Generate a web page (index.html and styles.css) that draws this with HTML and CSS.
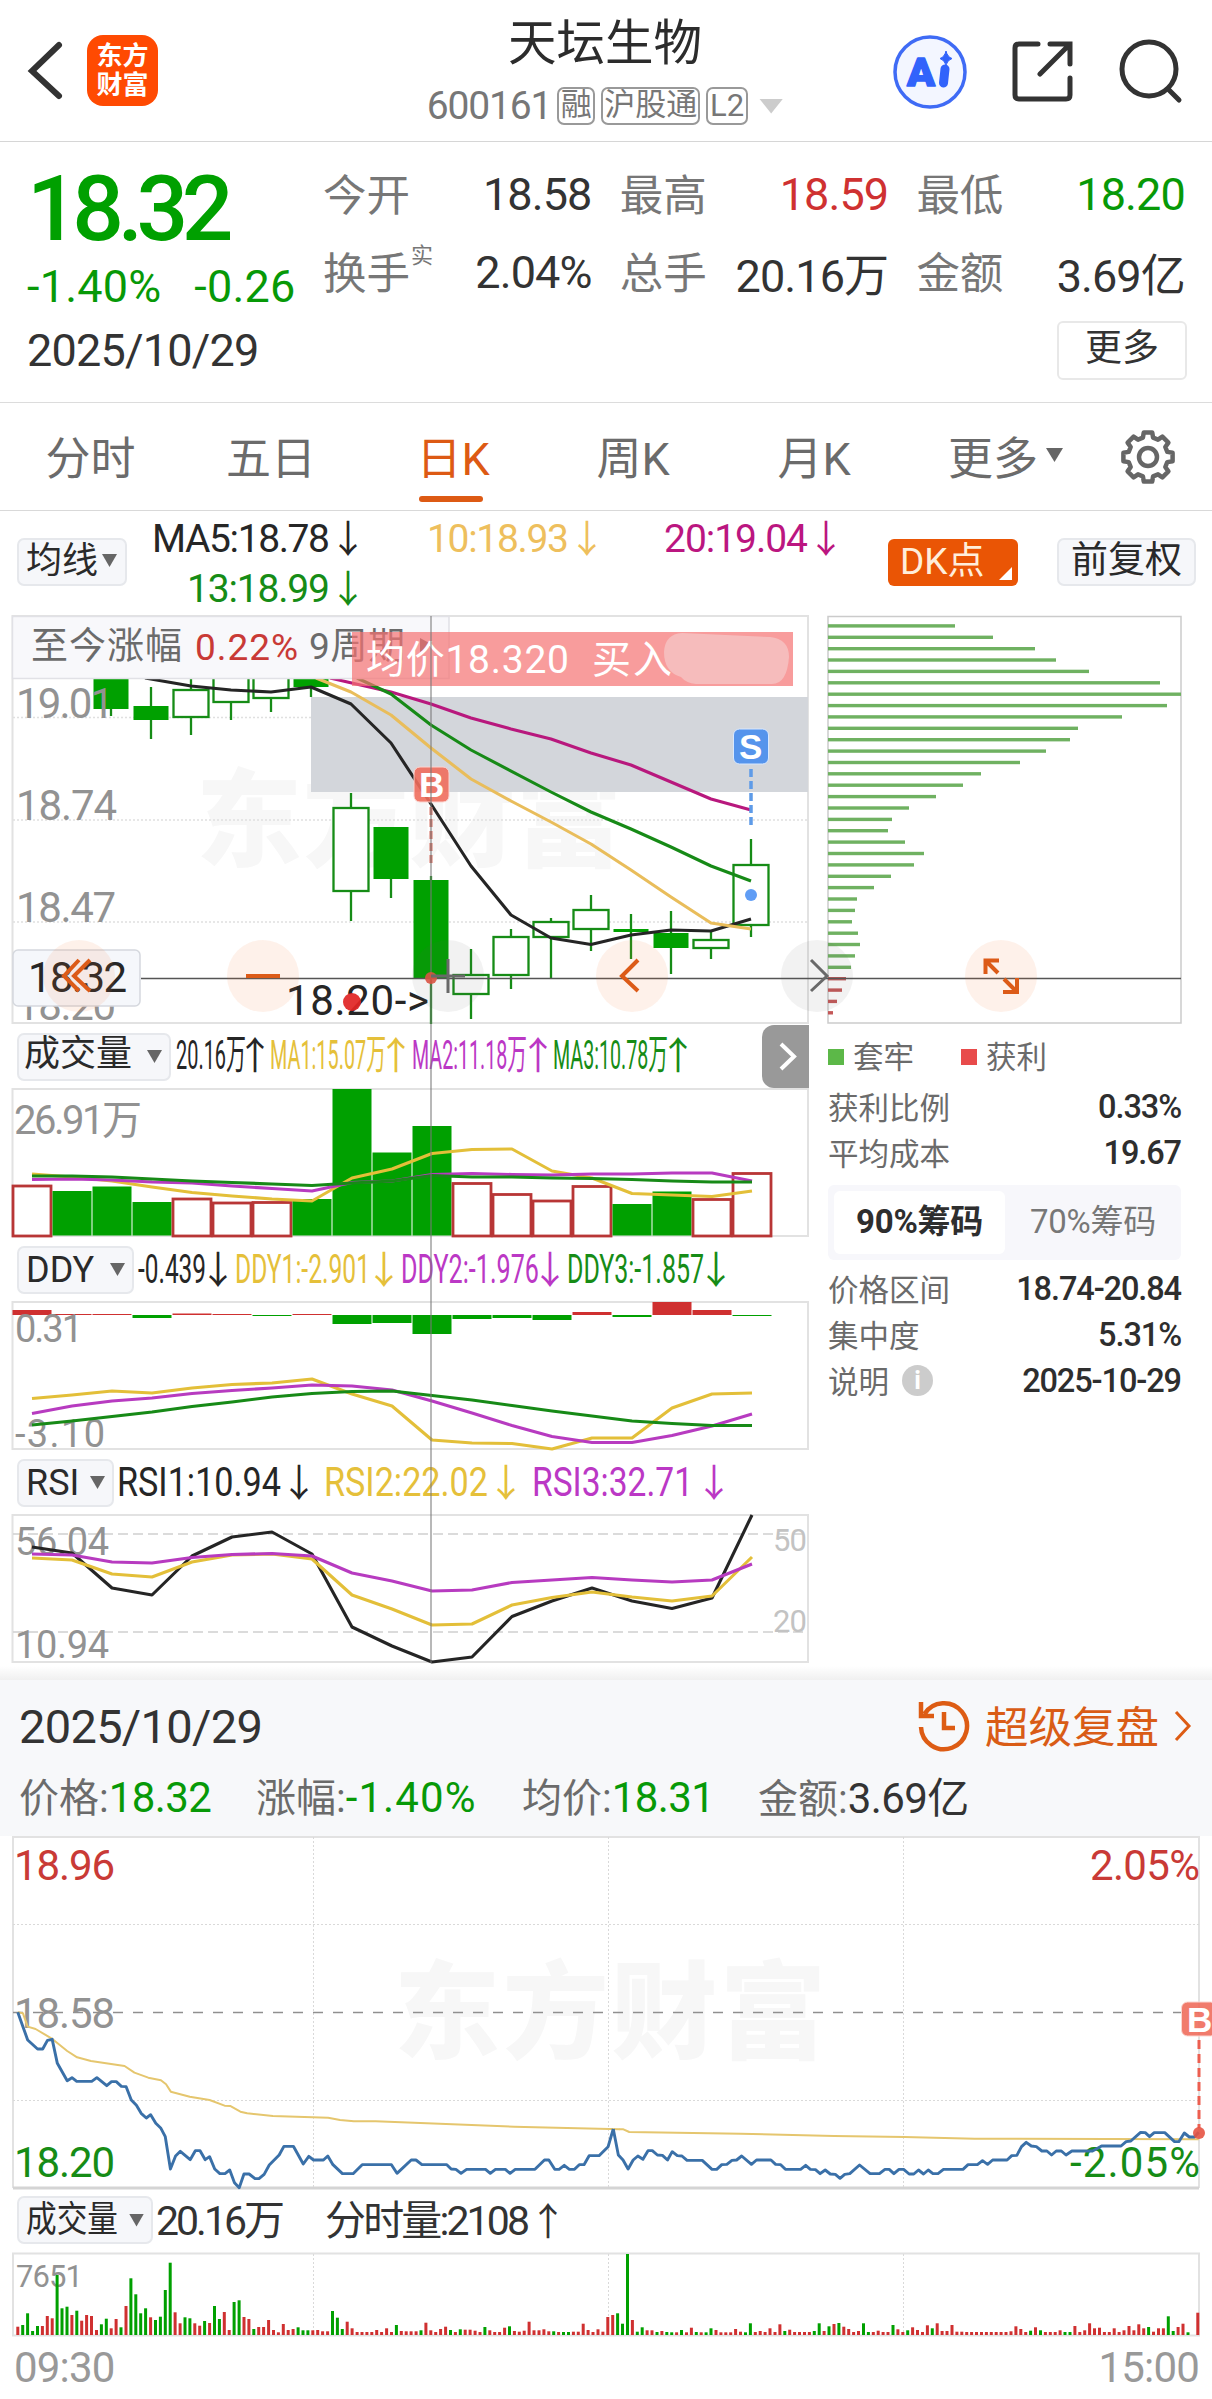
FILE: index.html
```html
<!DOCTYPE html>
<html lang="zh-CN">
<head>
<meta charset="utf-8">
<title>天坛生物 600161</title>
<link rel="stylesheet" href="styles.css">
</head>
<body>
<header class="topbar">
  <div class="topbar-left">
    <svg class="back" width="40" height="62" viewBox="24 41 40 62"><path d="M59 46 L32 72 L59 97"/></svg>
    <div class="logo"><span>东方</span><span>财富</span></div>
  </div>
  <div class="heading">
    <h1>天坛生物</h1>
    <div class="code-row"><span class="code">600161</span><span class="tag">融</span><span class="tag tag-wide">沪股通</span><span class="tag tag-l2">L2</span><i class="tri tri-light"></i></div>
  </div>
  <svg class="top-icons" width="310" height="90" viewBox="890 27 310 90">
    <circle class="ai-ring" cx="930" cy="72" r="35"/>
    <text class="ai-text" x="907" y="86" textLength="28" lengthAdjust="spacingAndGlyphs">A</text>
    <path class="ai-i" d="M945 69 L943.500 83"/>
    <path class="ai-star" d="M946 51 Q947.500 57 952 58.500 Q947.500 60 946 65 Q944.500 60 940 58.500 Q944.500 57 946 51Z"/>
    <path class="line-icon" d="M1038 44 H1019 Q1015 44 1015 48 V95 Q1015 99 1019 99 H1066 Q1070 99 1070 95 V78 M1050 44 H1070 V64 M1069 45 L1040 74"/>
    <circle class="line-icon" cx="1149" cy="69" r="27"/>
    <path class="line-icon" d="M1168 89 L1179 100"/>
  </svg>
</header>

<section class="quote">
  <div class="quote-main">
    <div class="price">18.32</div>
    <div class="change"><span>-1.40%</span><span>-0.26</span></div>
    <div class="date">2025/10/29</div>
  </div>
  <div class="quote-side">
    <div class="stats">
      <div class="stat"><span>今开</span><b>18.58</b></div>
      <div class="stat"><span>最高</span><b class="up">18.59</b></div>
      <div class="stat"><span>最低</span><b class="down">18.20</b></div>
      <div class="stat"><span>换手<sup>实</sup></span><b>2.04%</b></div>
      <div class="stat"><span>总手</span><b>20.16万</b></div>
      <div class="stat"><span>金额</span><b>3.69亿</b></div>
    </div>
    <div class="more-btn">更多</div>
  </div>
</section>

<nav class="tabs">
  <span>分时</span><span>五日</span><span class="active">日K</span><span>周K</span><span>月K</span><span>更多<i class="tri"></i></span>
  <svg width="60" height="60" viewBox="-30 -30 60 60"><path id="gear" class="gear"/><circle class="gear" r="9"/></svg>
</nav>

<section class="ma-row">
  <div class="pill pill-ma">均线<i class="tri"></i></div>
  <svg class="ma-values" width="740" height="101" viewBox="137 511 740 101">
    <g class="c-black"><text x="152" y="552" textLength="178">MA5:18.78</text><text class="arr" x="348" y="552">↓</text></g>
    <g class="c-gold"><text x="427" y="552" textLength="142">10:18.93</text><text class="arr" x="587" y="552">↓</text></g>
    <g class="c-mag"><text x="664" y="552" textLength="144">20:19.04</text><text class="arr" x="826" y="552">↓</text></g>
    <g class="c-green"><text x="187" y="602" textLength="143">13:18.99</text><text class="arr" x="348" y="602">↓</text></g>
  </svg>
  <div class="dk">DK点</div>
  <div class="pill pill-fq">前复权</div>
</section>

<section class="charts">
  <div class="charts-left">
    <svg class="chart" width="816" height="413" viewBox="0 612 816 413">
      <text class="watermark" x="196" y="858" textLength="426">东方财富</text>
      <path class="frame" d="M12.500 616H808V1023H12.500Z"/>
      <path class="dotted" d="M13 717.500H808M13 820H808M13 922H808"/>
      <rect class="gap-zone" x="311" y="697" width="497" height="95"/>
      <g id="candles"></g>
      <g class="axis"><text x="16" y="718" textLength="98">19.01</text><text x="16" y="820" textLength="101">18.74</text><text x="16" y="922" textLength="100">18.47</text><text x="16" y="1020" textLength="100">18.20</text></g>
      <polyline class="l-mag" points="330,678 391,692 431,704 471,718 511,729 551,739 591,753 631,765 671,782 711,799 751,810"/>
      <polyline class="l-green" points="357,678 391,694 431,725 471,750 551,792 591,812 631,829 671,847 711,866 751,881"/>
      <polyline class="l-black" points="145,678 191,686 231,690 271,692 311,687 351,704 391,743 431,804 471,866 511,915 551,938 591,944.500 631,935 671,930 711,931 751,919"/>
      <polyline class="l-gold" points="316,678 351,692 391,715 431,748 471,779 511,801 551,822 591,844 631,870 671,897 711,923 751,929"/>
      <rect class="info-box" x="12.500" y="616.500" width="436.500" height="62"/>
      <g class="info"><text x="31" y="659" textLength="151">至今涨幅</text><text class="c-red" x="195" y="660" textLength="103">0.22%</text><text x="309" y="659" textLength="96">9周期</text><path d="M420 638L433 645L420 652Z"/></g>
      <rect class="deal-bar" x="352" y="632" width="441" height="54"/>
      <g class="deal"><text x="366" y="673" textLength="203">均价18.320</text><text x="592" y="673" textLength="80">买入</text></g>
      <path class="smudge" d="M664 652Q665 634 682 633L770 637Q789 639 789 657Q787 684 772 684H696Q686 683 681 677Q664 672 664 652Z"/>
      <rect class="b-badge" x="414" y="767" width="35" height="35" rx="6"/><text class="badge-text" x="419" y="797" textLength="24">B</text>
      <path class="b-dash" d="M431 807V864"/>
      <rect class="s-badge" x="733.500" y="729" width="35" height="35" rx="6"/><text class="badge-text" x="739" y="759" textLength="24">S</text>
      <path class="s-dash" d="M751 769V825"/><circle class="s-dot" cx="751" cy="895" r="6"/>
      <rect class="price-box" x="13" y="950" width="127" height="56" rx="5"/>
      <text class="c-black t42" x="28" y="992" textLength="99">18.32</text>
      <text class="c-black t42" x="286" y="1015" textLength="143">18.20-&gt;</text>
      <circle class="low-dot" cx="352" cy="1002" r="9"/>
    </svg>
    <div class="ind-row">
      <div class="pill pill-vol"><span>成交量</span><i class="tri"></i></div>
      <svg width="585" height="63" viewBox="171 1025 585 63">
        <g class="c-black"><text x="176" y="1069" textLength="70" lengthAdjust="spacingAndGlyphs">20.16万</text><text class="arr arr-s" x="255" y="1069">↑</text></g>
        <g class="c-yel"><text x="270" y="1069" textLength="116" lengthAdjust="spacingAndGlyphs">MA1:15.07万</text><text class="arr arr-s" x="396" y="1069">↑</text></g>
        <g class="c-pur"><text x="412" y="1069" textLength="115" lengthAdjust="spacingAndGlyphs">MA2:11.18万</text><text class="arr arr-s" x="538" y="1069">↑</text></g>
        <g class="c-green"><text x="553" y="1069" textLength="115" lengthAdjust="spacingAndGlyphs">MA3:10.78万</text><text class="arr arr-s" x="678" y="1069">↑</text></g>
      </svg>
      <div class="next"><svg width="47" height="63" viewBox="762 1025 47 63"><path d="M781 1044L794 1056.500L781 1069"/></svg></div>
    </div>
    <svg class="chart" width="816" height="150" viewBox="0 1088 816 150">
      <path class="frame" d="M12.500 1089H808V1236H12.500Z"/>
      <g id="volume"></g>
      <text class="axis t40" x="14" y="1134" textLength="128">26.91万</text>
      <g data-lines="vol"></g>
    </svg>
    <div class="ind-row">
      <div class="pill pill-ddy">DDY<i class="tri"></i></div>
      <svg width="660" height="63" viewBox="134 1238 660 63">
        <g class="c-black"><text x="138" y="1283" textLength="68" lengthAdjust="spacingAndGlyphs">-0.439</text><text class="arr arr-s" x="218" y="1283">↓</text></g>
        <g class="c-yel"><text x="235" y="1283" textLength="135" lengthAdjust="spacingAndGlyphs">DDY1:-2.901</text><text class="arr arr-s" x="384" y="1283">↓</text></g>
        <g class="c-pur"><text x="401" y="1283" textLength="138" lengthAdjust="spacingAndGlyphs">DDY2:-1.976</text><text class="arr arr-s" x="550" y="1283">↓</text></g>
        <g class="c-green"><text x="567" y="1283" textLength="137" lengthAdjust="spacingAndGlyphs">DDY3:-1.857</text><text class="arr arr-s" x="716" y="1283">↓</text></g>
      </svg>
    </div>
    <svg class="chart" width="816" height="150" viewBox="0 1301 816 150">
      <path class="frame" d="M12.500 1302H808V1449H12.500Z"/>
      <g id="ddy"></g>
      <g class="axis t39"><text x="15" y="1342" textLength="68">0.31</text><text x="15" y="1447" textLength="90">-3.10</text></g>
      <g data-lines="ddy"></g>
    </svg>
    <div class="ind-row">
      <div class="pill pill-rsi">RSI<i class="tri"></i></div>
      <svg width="680" height="63" viewBox="114 1451 680 63">
        <g class="c-black"><text x="117" y="1496" textLength="164" lengthAdjust="spacingAndGlyphs">RSI1:10.94</text><text class="arr" x="299" y="1496">↓</text></g>
        <g class="c-yel"><text x="324" y="1496" textLength="164" lengthAdjust="spacingAndGlyphs">RSI2:22.02</text><text class="arr" x="506" y="1496">↓</text></g>
        <g class="c-pur"><text x="532" y="1496" textLength="161" lengthAdjust="spacingAndGlyphs">RSI3:32.71</text><text class="arr" x="714" y="1496">↓</text></g>
      </svg>
    </div>
    <svg class="chart" width="816" height="150" viewBox="0 1514 816 150">
      <path class="frame" d="M12.500 1515H808V1662H12.500Z"/>
      <path class="rsi-dash" d="M13 1534H808M13 1632H808"/>
      <g class="axis t39"><text x="15" y="1555" textLength="94">56.04</text><text x="15" y="1658" textLength="94">10.94</text></g>
      <g class="axis-light"><text x="773" y="1551" textLength="34">50</text><text x="773" y="1632" textLength="34">20</text></g>
      <g data-lines="rsi"></g>
    </svg>
  </div>

  <aside class="chips">
    <svg class="chart" width="360" height="413" viewBox="824 612 360 413">
      <path class="chip-frame" d="M828 616.500H1181V1023H828Z"/>
      <g id="chips"></g>
    </svg>
    <div class="legend"><i class="sq sq-green"></i><span>套牢</span><i class="sq sq-red"></i><span>获利</span></div>
    <div class="kv"><span>获利比例</span><b>0.33%</b></div>
    <div class="kv"><span>平均成本</span><b>19.67</b></div>
    <div class="toggle"><span class="on">90%筹码</span><span>70%筹码</span></div>
    <div class="kv"><span>价格区间</span><b>18.74-20.84</b></div>
    <div class="kv"><span>集中度</span><b>5.31%</b></div>
    <div class="kv"><span>说明<i class="info-dot">i</i></span><b>2025-10-29</b></div>
  </aside>

  <svg class="overlay" width="1212" height="1054" viewBox="0 612 1212 1054">
    <path class="cross-v" d="M431 616V1663"/>
    <path class="cross-h" d="M141 978.500H1181"/>
    <circle class="cross-dot" cx="431" cy="978" r="6"/>
    <g class="btn-warm"><circle cx="79" cy="976" r="36"/><circle cx="263" cy="976" r="36"/><circle cx="632" cy="976" r="36"/><circle cx="1001" cy="976" r="36"/></g>
    <g class="btn-cool"><circle cx="448" cy="976" r="36"/><circle cx="817" cy="976" r="36"/></g>
    <path class="ctl" d="M79 960L64 976L79 991M90 960L74 976L90 991M246 976H280M638 960L622 976L638 991M985.500 974V960.500H999M986 961L998 973M1017 978V992H1003M1004 979L1016 991"/>
    <path class="ctl ctl-grey" d="M431 976H465M448 959V993M811 960L827 976L811 991"/>
  </svg>
</section>

<div class="shade"></div>
<section class="replay">
  <div class="replay-top">
    <span class="replay-date">2025/10/29</span>
    <span class="replay-link">
      <svg width="56" height="56" viewBox="916 1698 56 56"><path d="M924.500 1714A23 23 0 1 1 921 1727M921 1702V1716H934M944 1712V1728H955"/></svg>
      <span class="replay-label">超级复盘</span>
      <svg width="22" height="36" viewBox="1173 1708 22 36"><path class="thin" d="M1177 1712L1190 1726L1177 1740"/></svg>
    </span>
  </div>
  <div class="replay-stats">
    <div>价格:<b class="down">18.32</b></div><div>涨幅:<b class="down wide">-1.40%</b></div><div>均价:<b class="down">18.31</b></div><div>金额:<b>3.69亿</b></div>
  </div>
</section>

<section class="minute">
  <svg class="chart" width="1212" height="354" viewBox="0 1836 1212 354">
    <text class="watermark" x="394" y="2050" textLength="432">东方财富</text>
    <path class="frame" d="M13 2188V1837H1199V2188"/><path class="frame-bottom" d="M13 2188H1199"/>
    <path class="dotted-dark" d="M313.500 1837V2188M608.500 1837V2188M903.500 1837V2188M13 1924.500H1199M13 2100.500H1199"/>
    <path class="mid-dash" d="M13 2012.500H1199"/>
    <g class="t42"><text class="c-red" x="14" y="1880" textLength="101">18.96</text><text class="axis" x="14" y="2028" textLength="101">18.58</text><text class="c-green" x="14" y="2177" textLength="101">18.20</text>
    <text class="c-red" x="1090" y="1880" textLength="110">2.05%</text><text class="c-green" x="1070" y="2177" textLength="130">-2.05%</text></g>
    <g class="scaled" transform="translate(0 1830) scale(.3954 .33333)">
      <polyline class="avg" points="45,547 58,550 70,590 90,597 130,625 170,663 195,682 230,693 315,708 340,728 375,743 407,751 420,763 432,785 480,800 530,810 568,827 582,828 608,845 625,850 690,858 830,863 860,870 895,874 950,874 1300,890 1568,898"/>
      <polyline class="px" points="45,547 58,590 70,630 95,657 108,657 120,631 132,628 145,700 170,752 182,743 194,754 232,754 245,743 270,767 282,755 294,755 307,769 319,770 332,810 345,826 357,850 370,864 381,854 394,880 407,895 418,920 431,1017 444,978 456,964 481,989 494,962 506,962 519,989 530,980 543,1017 556,1031 569,1031 581,1020 593,1058 605,1073 617,1032 630,1032 645,1046 655,1046 668,1033 681,1005 706,975 718,949 742,949 767,1002 781,979 793,990 818,990 829,978 842,1004 866,1031 893,1031 916,1004 990,1004 1004,1030 1040,990 1052,990 1067,1004 1130,1004 1141,1017 1153,1018 1166,1030 1180,1018 1228,1018 1240,1030 1253,1018 1278,1018 1290,1030 1303,1018 1353,1018 1377,990 1388,990 1403,1018 1414,1018 1427,1006 1440,1018 1453,1018 1465,1004 1477,1004 1490,977 1515,977 1538,950 1551,897"/>
    </g>
    <g class="scaled" transform="translate(600 1830) scale(.3903 .33333)">
      <polyline class="avg" points="50,898 60,898 75,906 360,911 600,918 780,921 960,926 1534,928"/>
      <polyline class="px" points="34,897 47,975 59,990 72,1017 85,990 97,978 110,988 123,962 134,962 147,975 160,976 173,990 185,965 198,977 210,978 223,991 262,991 287,1018 299,1018 312,1004 325,1003 338,991 350,990 363,978 388,1003 401,990 438,990 450,1003 463,1004 475,1018 514,1018 527,1006 539,1018 552,1019 564,1031 577,1020 590,1032 603,1033 615,1045 627,1033 640,1031 665,1005 692,1031 716,1031 730,1018 741,1018 753,1031 766,1018 778,1018 792,1032 804,1032 816,1020 829,1032 841,1020 853,1031 866,1031 880,1018 930,1018 943,1004 967,1004 980,992 993,1003 1006,990 1043,990 1055,977 1068,976 1080,950 1092,937 1105,948 1118,950 1132,963 1145,963 1157,975 1169,963 1182,963 1194,975 1209,963 1262,963 1275,955 1285,948 1335,948 1348,935 1360,933 1385,907 1397,908 1408,920 1420,908 1447,908 1472,935 1483,935 1497,909 1510,921 1523,921 1534,907"/>
    </g>
    <rect class="b-badge" x="1181.500" y="2002" width="35" height="34" rx="6"/><text class="badge-text" x="1187" y="2032" textLength="24">B</text>
    <path class="b-dash b-dash-strong" d="M1199 2040V2128"/><circle class="end-dot" cx="1199" cy="2133" r="6"/>
  </svg>
  <div class="ind-row ind-minute">
    <div class="pill pill-mvol"><svg width="94" height="44" viewBox="26 2198 94 44"><text x="26" y="2232" textLength="92" lengthAdjust="spacingAndGlyphs">成交量</text></svg><i class="tri"></i></div>
    <svg width="420" height="60" viewBox="153 2190 420 60">
      <text class="c-dark" x="156" y="2235" textLength="129">20.16万</text>
      <g class="c-dark"><text x="325" y="2235" textLength="205">分时量:2108</text><text class="arr" x="548" y="2235">↑</text></g>
    </svg>
  </div>
  <svg class="chart" width="1212" height="88" viewBox="0 2250 1212 88">
    <path class="frame" d="M13 2253.500H1199V2335.500H13Z"/>
    <path class="dotted-dark" d="M313.500 2254V2335M608.500 2254V2335M903.500 2254V2335"/>
    <text class="axis t31" x="16" y="2287" textLength="67">7651</text>
    <g id="minuteVol"></g>
  </svg>
  <div class="times"><span>09:30</span><span>15:00</span></div>
</section>
<script src="charts.js"></script>
</body>
</html>
```
FILE: styles.css
```css
* { box-sizing: border-box; }
body { margin: 0; width: 1212px; height: 2399px; overflow: hidden; background: #fff; color: #333; font-family: Roboto, "Liberation Sans", "Noto Sans CJK SC", sans-serif; }
svg { display: block; flex: none; }
b { font-weight: 400; }
.up { color: #cf3131; }
.down { color: #079907; }
.tri { flex: none; width: 15px; height: 13px; background: #666; clip-path: polygon(0 0, 100% 0, 50% 100%); }
.tri-light { width: 24px; height: 15px; background: #ccc; margin-left: 11px; }

.topbar { height: 142px; border-bottom: 1px solid #d6d6d6; display: grid; grid-template-columns: 310px 1fr 310px; padding: 0 12px 0 0; }
.topbar-left { display: flex; align-items: center; gap: 23px; padding-left: 24px; }
.back path { fill: none; stroke: #333; stroke-width: 6; stroke-linecap: round; }
.logo { width: 71px; height: 71px; border-radius: 16px; background: #ff4a02; color: #fff; font-size: 26px; line-height: 29px; font-weight: 700; display: flex; flex-direction: column; align-items: center; justify-content: center; }
.heading { display: flex; flex-direction: column; align-items: center; padding: 16px 0 0 10px; }
h1 { margin: 0; font-size: 48.5px; line-height: 56px; font-weight: 400; color: #2c2c2c; }
.code-row { display: flex; align-items: center; height: 38px; margin-top: 15px; color: #777; white-space: nowrap; }
.code { font-size: 39px; letter-spacing: -1.2px; margin-right: 6px; }
.tag { height: 38px; width: 38px; border: 2px solid #999; border-radius: 7px; font-size: 31px; line-height: 31px; text-align: center; margin-right: 6px; }
.tag-wide { width: 99px; }
.tag-l2 { width: 42px; line-height: 34px; margin-right: 0; }
.top-icons { margin-top: 27px; }
.ai-ring { fill: #f3f6ff; stroke: #3f6bf5; stroke-width: 3.5; }
.ai-text { font-size: 39px; font-weight: 900; fill: #3163fb; stroke: #3163fb; stroke-width: 1.5; stroke-linejoin: round; }
.ai-i { stroke: #3163fb; stroke-width: 9; stroke-linecap: round; }
.ai-star { fill: #3163fb; stroke: #3163fb; stroke-width: 1; }
.line-icon { fill: none; stroke: #333; stroke-width: 5; stroke-linecap: round; }

.quote { height: 261px; border-bottom: 1px solid #dcdcdc; display: flex; }
.quote-main { width: 324px; padding: 21px 0 0 27px; white-space: nowrap; }
.price { font-size: 91px; line-height: 92px; font-weight: 500; color: #00a000; letter-spacing: -6.4px; }
.change { display: flex; gap: 33px; margin-top: 9px; font-size: 45px; line-height: 46px; color: #079907; letter-spacing: .2px; }
.date { margin-top: 18px; font-size: 45px; line-height: 46px; letter-spacing: -.8px; }
.quote-side { flex: 1; padding: 14px 27px 0 0; display: flex; flex-direction: column; align-items: flex-end; }
.stats { width: 861px; display: grid; grid-template-columns: repeat(3, 267.5px); column-gap: 29.2px; grid-auto-rows: 77.5px; }
.stat { display: flex; justify-content: space-between; align-items: center; font-size: 43.5px; white-space: nowrap; color: #777; }
.stat span { position: relative; top: -2px; left: -1px; }
.stat b { font-size: 45px; letter-spacing: -.9px; color: #333; }
.stat b.up { color: #cf3131; }
.stat b.down { color: #079907; }
.stat sup { font-size: 22px; line-height: 0; position: relative; top: -10px; margin-left: 1px; }
.more-btn { width: 130px; height: 59px; margin: 10px -2px 0 0; border: 2px solid #e8e8e8; border-radius: 6px; font-size: 37px; line-height: 52px; text-align: center; }

.tabs { height: 108px; border-bottom: 1px solid #d9d9d9; display: grid; grid-template-columns: 181px 180px 184px 176px 186px 197px 88px; justify-items: center; align-items: center; font-size: 45px; color: #6b6b6b; }
.tabs span { display: flex; align-items: center; height: 107px; padding-bottom: 3px; }
.tabs .tri { width: 17px; height: 14px; margin-left: 8px; }
.tabs .active { color: #dd5a14; position: relative; }
.tabs .active::after { content: ""; position: absolute; left: 3px; width: 64px; height: 6px; bottom: 8px; border-radius: 3px; background: #dd5a14; }
.gear { fill: none; stroke: #666; stroke-width: 4.5; stroke-linejoin: round; }

.ma-row { height: 101px; display: flex; align-items: flex-start; padding-left: 17px; }
.pill { flex: none; height: 48px; background: #f6f7fa; border: 2px solid #e6e8ec; border-radius: 7px; font-size: 36px; line-height: 40px; color: #2a2a2a; display: flex; align-items: center; white-space: nowrap; padding-left: 7px; }
.pill-ma { width: 110px; margin-top: 27px; gap: 4px; padding-bottom: 3px; }
.ma-row .ma-values { margin-left: 10px; }
.ma-values text { font-size: 39px; }
.dk { width: 130px; height: 47px; margin: 28px 39px 0 11px; border-radius: 6px; background: #ea5505; color: #ffeedb; font-size: 37px; line-height: 46px; padding-left: 12px; position: relative; }
.dk::after { content: ""; position: absolute; right: 6px; bottom: 6px; width: 13px; height: 13px; background: #fff; clip-path: polygon(100% 0, 100% 100%, 0 100%); }
.pill-fq { width: 139px; margin-top: 27px; font-size: 37px; padding: 0 0 3px 12px; }

.charts { height: 1054px; display: flex; position: relative; }
.charts-left { width: 824px; }
.overlay { position: absolute; left: 0; top: 0; }
.chips { width: 357px; }
.chips .legend, .chips .kv, .chips .toggle { margin-left: 4px; }
text { font-size: 42px; }
.t42, .t42 text { font-size: 42px; }
.t40 { font-size: 40px; }
.t39 text { font-size: 38px; }
.axis-light text { font-size: 31px; }
.t31 { font-size: 31px; }
.axis, .axis text { fill: #929292; }
.axis-light { fill: #c3c3c3; }
.c-black { fill: #262626; } .c-dark { fill: #333; } .c-gold { fill: #eebf5d; } .c-yel { fill: #e5c03a; } .c-mag { fill: #bb1680; } .c-pur { fill: #bb38c5; } .c-green { fill: #168c16; } .c-red { fill: #c93a36; }
text.arr { font-family: "Noto Sans CJK SC", sans-serif; text-anchor: middle; font-size: 38px; }
polyline { fill: none; stroke-width: 3.1; stroke-linejoin: round; }
.l-black { stroke: #252525; } .l-gold { stroke: #e9bd5b; } .l-mag { stroke: #b8187d; } .l-green { stroke: #178a17; } .l-yel { stroke: #e3bf39; } .l-pur { stroke: #b73bc0; }
.frame { fill: none; stroke: #e2e2e2; stroke-width: 2; }
.frame-bottom { stroke: #d4d4d4; stroke-width: 3; }
.dotted { fill: none; stroke: #e0e0e0; stroke-width: 1.5; stroke-dasharray: 2 2; }
.dotted-dark { fill: none; stroke: #d9d9d9; stroke-width: 1; stroke-dasharray: 2 2; }
.watermark { font-size: 106px; font-weight: 900; fill: #f7f7f7; }
.gap-zone { fill: #d3d6db; }
.cg { fill: #00a000; } .cr { fill: #cf3030; }
.hg { fill: #fff; stroke: #168c16; stroke-width: 2.3; }
.hr { fill: #fff; stroke: #b83636; stroke-width: 2.8; }
.wick { stroke: #168c16; stroke-width: 2.3; }
.info-box { fill: #f8f8fb; stroke: #e1e1e6; stroke-width: 1.5; }
.info { fill: #6b6b6b; } .info text { font-size: 37px; } .info .c-red { fill: #c93a36; }
.deal-bar { fill: rgba(245, 114, 114, .7); }
.deal { fill: #fff; } .deal text { font-size: 39px; }
.smudge { fill: #f6bcbc; }
.b-badge { fill: #ef6d5c; fill-opacity: .9; stroke: #fbd5d0; stroke-width: 1; }
.s-badge { fill: #5594ec; stroke: #d8e8ff; stroke-width: 1; }
.badge-text { font-size: 35px; font-weight: 700; font-family: "Liberation Sans", sans-serif; fill: #fff; }
.b-dash { stroke: #d87265; stroke-width: 3; stroke-dasharray: 8 4; }
.b-dash-strong { stroke: #ec5f50; stroke-dasharray: 9 5; }
.s-dash { stroke: #5e9be8; stroke-width: 3.5; stroke-dasharray: 8 4; }
.s-dot { fill: #609df5; } .low-dot { fill: #e12626; fill-opacity: .93; } .cross-dot, .end-dot { fill: #e65343; fill-opacity: .9; }
.price-box { fill: #f5f7fb; stroke: #d5d8de; stroke-width: 1.5; }
.cross-v { stroke: #777; stroke-opacity: .7; stroke-width: 1.5; } .cross-h { stroke: #555; stroke-width: 1.3; }
.btn-warm { fill: rgba(250, 115, 45, .1); } .btn-cool { fill: rgba(90, 90, 90, .08); }
.ctl { fill: none; stroke: #dc5b18; stroke-width: 4; } .ctl-grey { stroke: #696969; stroke-width: 3; }

.ind-row { height: 63px; display: flex; align-items: center; padding-left: 17px; }
.ind-row .pill .tri { margin-left: auto; margin-right: 7px; }
.pill-vol { width: 154px; padding-left: 5px; } .pill-ddy { width: 117px; } .pill-rsi { width: 97px; }
.pill-vol span { padding-bottom: 5px; }
.ind-row > svg text { font-size: 41px; }
.ind-row > svg text.arr { font-size: 38px; }
.next { margin-left: 6px; width: 47px; height: 63px; border-radius: 12px 0 0 12px; background: #999; }
.next path { fill: none; stroke: #fff; stroke-width: 4; }
.rsi-dash { stroke: #d0d0d0; stroke-width: 1.3; stroke-dasharray: 10 5; }

.chip-frame { fill: none; stroke: #cbcbcb; stroke-width: 1.5; }
.chip-g { fill: #6fb161; } .chip-r { fill: #c45858; }
.legend { display: flex; align-items: center; height: 63px; font-size: 30.5px; color: #6b6b6b; }
.legend span { margin-left: 9px; width: 108px; padding-bottom: 4px; }
.sq { width: 16px; height: 16px; } .sq-green { background: #5cb848; } .sq-red { background: #e84b4b; }
.kv { display: flex; align-items: center; justify-content: space-between; height: 46px; font-size: 30.5px; color: #6b6b6b; }
.kv b { font-size: 32.5px; font-weight: 500; color: #2e2e2e; letter-spacing: -1.1px; }
.kv span { display: flex; align-items: center; position: relative; top: -1px; }
.legend + .kv { margin-top: -4px; }
.toggle { height: 75px; margin-top: 9px; margin-bottom: 6px; background: #f7f7fb; border-radius: 6px; padding: 6px; display: grid; grid-template-columns: 171px 1fr; font-size: 33px; line-height: 61px; text-align: center; color: #777; padding-right: 0; letter-spacing: -.3px; }
.toggle .on { background: #fff; border-radius: 6px; font-weight: 700; color: #2e2e2e; }
.info-dot { margin-left: 13px; width: 31px; height: 31px; border-radius: 50%; background: #ccc; color: #fff; font: 700 25px/31px Roboto, sans-serif; text-align: center; }

.shade { height: 14px; background: linear-gradient(#fff, #f0f0f0); }
.replay { height: 156px; background: #f7f8fa; padding: 16px 20px 0 19px; }
.replay-top { display: flex; justify-content: space-between; align-items: center; height: 60px; }
.replay-date { font-size: 47px; letter-spacing: -.7px; }
.replay-link { display: flex; align-items: center; color: #d95c16; font-size: 43.5px; gap: 13px; }
.replay-label { padding-bottom: 3px; }
.replay-link svg path { fill: none; stroke: #dd5c14; stroke-width: 4.5; } .replay-link svg .thin { stroke-width: 3; }
.replay-link svg:last-child { margin-right: -2px; }
.replay-stats { display: grid; grid-template-columns: 237px 266px 236px 1fr; align-items: center; height: 60px; margin-top: 8px; font-size: 40px; color: #6b6b6b; white-space: nowrap; }
.replay-stats b { font-size: 42px; letter-spacing: -.6px; }
.replay-stats b.wide { letter-spacing: 1.1px; }
.replay-stats b:not(.down) { color: #333; }

.avg { stroke: #e5c66e; stroke-width: 2; } .px { stroke: #3a70a8; stroke-width: 2.9; }
.scaled polyline { vector-effect: non-scaling-stroke; }
.mid-dash { stroke: #909090; stroke-width: 1.7; stroke-dasharray: 10 10; }
.ind-minute { height: 60px; }
.pill-mvol { width: 136px; }
.pill-mvol text { font-size: 36px; fill: #2a2a2a; }
.times { display: flex; justify-content: space-between; padding: 6px 13px 0 14px; font-size: 42px; line-height: 48px; color: #999; letter-spacing: -.8px; }
```
FILE: charts.js
```js
const NS = "http://www.w3.org/2000/svg";
function add(parent, tag, cls, attrs) {
  const el = document.createElementNS(NS, tag);
  el.setAttribute("class", cls);
  for (const k in attrs) el.setAttribute(k, attrs[k]);
  parent.appendChild(el);
}
const byId = id => document.getElementById(id);

// Gear outline with eight teeth
const gear = [];
for (let i = 0; i < 8; i++) {
  const a = i * Math.PI / 4;
  for (const [r, d] of [[20, -.26], [25, -.17], [25, .17], [20, .26]]) {
    gear.push((r * Math.sin(a + d)).toFixed(1) + " " + (-r * Math.cos(a + d)).toFixed(1));
  }
}
byId("gear").setAttribute("d", "M" + gear.join("L") + "Z");

// Candles: hollow flag, body top, body bottom, wick top, wick bottom
[[0,670,709,670,716],[0,706,720,687,739],[1,690,717,670,735],[1,670,702,670,720],[1,670,698,670,712],[0,670,687,670,697],
 [1,808,891,793,921],[0,827,879,827,898],[0,880,978,876,1024],[1,975,994,949,1019],[1,937,975,929,989],[1,922,937,918,978],
 [1,910,929,895,951],[0,929,932,914,959],[0,933,948,911,974],[1,940,948,931,959],[1,865,925,839,937]]
.forEach(([hollow, top, bottom, high, low], i) => {
  const x = 111 + 40 * i, g = byId("candles");
  add(g, "path", "wick", { d: `M${x} ${high}V${low}` });
  add(g, "rect", hollow ? "hg" : "cg", { x: x - 17.5, y: top, width: 35, height: bottom - top });
});

// Daily volume
"r1185.5 g1191 g1186.5 g1202 r1198.5 r1202.5 r1202 g1199 g1089 g1152.5 g1126 r1183 r1194 r1200.5 r1186 g1204 g1191.5 r1199 r1173"
.split(" ").forEach((s, i) => {
  const y = +s.slice(1), x = 12.5 + 40 * i, red = s[0] === "r";
  add(byId("volume"), "rect", red ? "hr" : "cg", { x: red ? x + .5 : x, y: red ? y + .5 : y, width: red ? 38 : 39, height: 1235.5 - y });
});

// DDY bars as offsets from the zero line
[-5,-1,-1,3,-1.5,-1,1,-1,9,8,19,4,3,5,-3,2,-13,-5,1].forEach((v, i) => {
  add(byId("ddy"), "rect", v < 0 ? "cr" : "cg", { x: 12.5 + 40 * i, y: Math.min(1315, 1315 + v), width: 39, height: Math.abs(v) });
});

const series = {
  vol: {
    "l-yel": [1174,1177,1181,1187,1192.5,1196,1199,1201,1178,1169,1153.5,1149.5,1149,1171,1178,1193.5,1195,1196.5,1191],
    "l-pur": [1179.5,1179,1180,1182,1183,1186,1188.5,1191,1182.5,1181,1174.5,1173.5,1174.5,1175,1174,1174,1173,1173,1181],
    "l-green": [1176,1176,1177,1179,1181,1182.5,1184,1185.5,1183,1181,1175.5,1177,1177,1178,1178.5,1179.5,1181,1182,1182]
  },
  ddy: {
    "l-yel": [1398.5,1395,1391,1393,1388,1384.5,1383,1379,1394,1406,1440,1443,1443.5,1449,1438,1438,1408,1394,1393],
    "l-pur": [1413.5,1406,1401,1398,1393.5,1390.5,1388,1385,1386,1390,1401,1413,1425.5,1436.5,1442.5,1442.5,1435.5,1426,1414],
    "l-green": [1425,1421,1416.5,1412,1406.5,1402,1397,1393.5,1391.5,1391,1395.5,1400,1405.5,1411,1416,1421,1423.5,1425.5,1425.5]
  },
  rsi: {
    "l-black": [1547,1553,1588,1595,1556,1537,1532,1554,1627,1646,1662,1657,1616.5,1601,1588,1601,1608.5,1598,1515],
    "l-yel": [1558,1560,1574,1577,1562,1555,1554,1559,1595,1609,1625,1624,1605,1597.5,1592,1597,1601,1596,1557],
    "l-pur": [1554,1555,1562,1563,1557.5,1554.5,1553.5,1556,1573,1581,1591,1590,1582.5,1580,1577.5,1580,1582,1580,1564]
  }
};
document.querySelectorAll("[data-lines]").forEach(g => {
  for (const [cls, ys] of Object.entries(series[g.dataset.lines])) {
    add(g, "polyline", cls, { points: ys.map((y, i) => `${32 + 40 * i},${y}`).join(" ") });
  }
});

// Chip distribution
[127,165,207,228,261,332,353,339,294,250,242,218,192,153,135,108,81,64,60,77,96,86,63,46,29,27,24,30,32,27,23,18,14,9,5].forEach((w, i) => {
  add(byId("chips"), "rect", i > 30 ? "chip-r" : "chip-g", { x: 828, y: (624.2 + 11.38 * i).toFixed(1), width: w, height: 3.4 });
});

// Per-minute volume
("r25 g30 g65 g12 g27 r27 r57 r50 g180 g80 g85 r60 g73 r43 r60 r57 r15 g32 g49 r20 r48 g23 r87 g170 g122 g65 g80 r53 g45 g55 g135 g217 r68 r35 g53 g50 r35 r28 g42 r36 g87 g48 r69 r15 g99 g104 r54 r48 g18 r24 r24 r45 r15 r8 r33 r15 r18 g23 g14 g14 r14 r15 r11 r11 g72 g52 g18 r40 r20 " +
"r9 r9 r9 r9 r15 r9 r20 r9 g30 r12 r11 r11 r11 g14 r37 r14 r9 r18 r25 g15 r9 g17 r16 r16 r13 r9 g24 r14 r9 r9 r22 g26 r12 r10 r13 r40 r14 r14 r17 r11 g11 r9 g9 g9 r10 r10 r34 r15 r9 r17 r10 r54 r60 g65 g34 g243 r45 g10 g23 r14 r14 g9 r12 g9 g8 r8 g15 r8 r22 g9 r8 g8 g20 r15 r8 r8 r8 r18 r10 g8 g35 r9 r12 r9 r20 r9 r32 g12 r16 r9 r9 r9 r9 g12 g35 r12 g26 r33 g36 r25 r18 r9 r12 g35 g9 r9 r13 r9 r9 g30 r17 r9 g14 r23 r15 r9 r29 g20 r35 r12 r12 r30 r10 r10 r9 r9 r9 r9 r9 r9 r9 r9 r9 r11 r26 r18 r9 g13 r23 g14 r9 r9 r9 r14 g9 g9 r27 r9 r14 r35 r20 r22 r9 r9 r20 r9 r14 r27 r14 r32 r20 g24 r10 r20 r20 g56 g12 r24 r34 g8 r0 r67")
.split(" ").forEach((s, i, all) => {
  const h = +s.slice(1) / 3, x = 16.3 + i * 1180 / (all.length - 1);
  add(byId("minuteVol"), "rect", s[0] === "r" ? "cr" : "cg", { x: x.toFixed(1), y: (2335 - h).toFixed(1), width: 3, height: h.toFixed(1) });
});
```
